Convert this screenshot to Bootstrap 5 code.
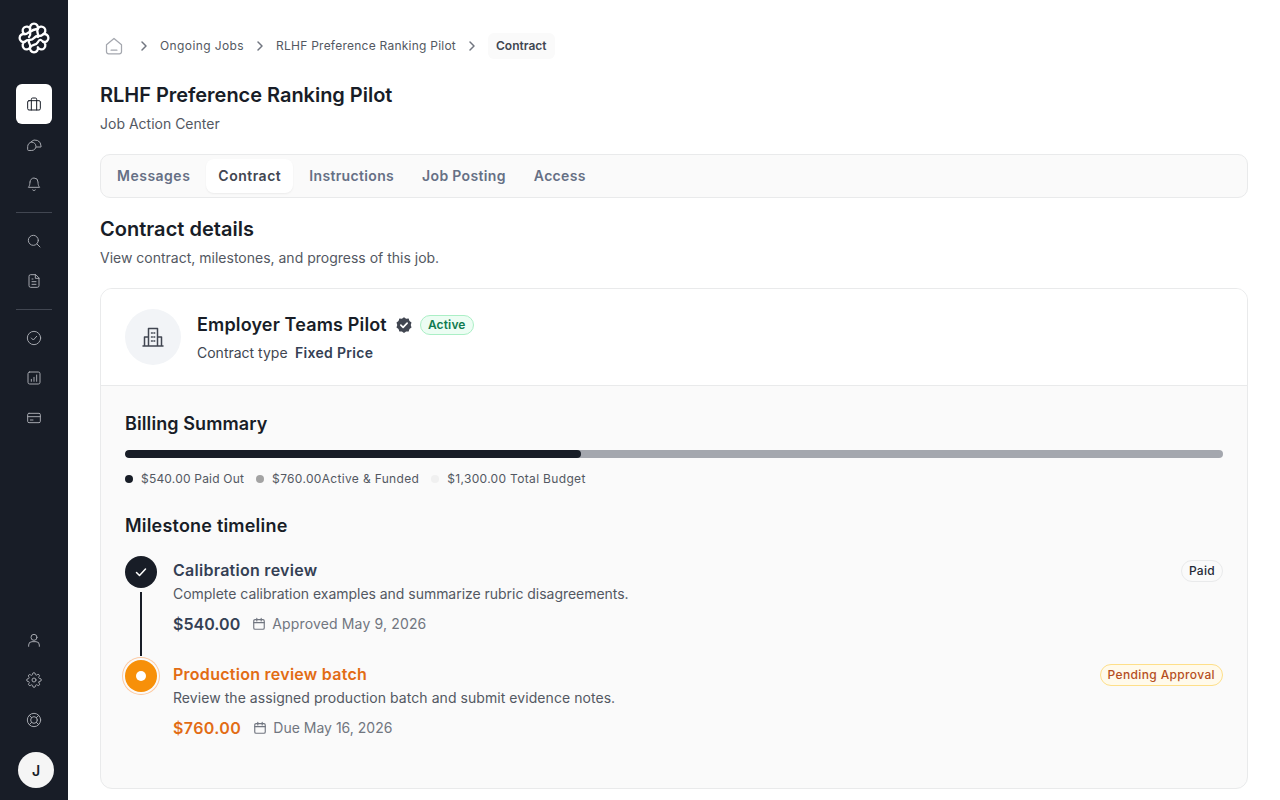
<!DOCTYPE html>
<html lang="en">
<head>
<meta charset="utf-8">
<title>Contract</title>
<link href="https://cdn.jsdelivr.net/npm/bootstrap@5.3.0/dist/css/bootstrap.min.css" rel="stylesheet">
<style>
html,body{height:100%;}
body{font-family:Inter,"Liberation Sans",sans-serif;color:#181d27;background:#fff;overflow:hidden;}
.app-shell{height:800px;}
.side-rail{width:68px;background:#181d27;flex:none;padding-top:22px;}
.rail-logo{height:32px;margin-bottom:30px;}
.rail-btn{width:36px;height:40px;border-radius:6px;color:#a4a7ae;}
.rail-btn svg{width:16px;height:16px;fill:none;stroke:currentColor;stroke-width:1.5;stroke-linecap:round;stroke-linejoin:round;}
.rail-btn.is-on{background:#fff;color:#181d27;}
.rail-rule{width:36px;height:1px;background:#414651;margin:8px 0;}
.rail-avatar{width:36px;height:36px;border-radius:50%;background:#f5f5f5;color:#181d27;font-size:14px;font-weight:600;margin:12px 0 12px 4px;}
.main-pane{padding:32px 32px 0;min-width:0;}
.crumbs{height:28px;font-size:12px;color:#535862;letter-spacing:.24px;margin-left:4px;}
.crumbs svg.chev{width:12px;height:12px;margin:0 10px;fill:none;stroke:#717680;stroke-width:1.5;stroke-linecap:round;stroke-linejoin:round;}
.crumbs svg.chev.chev-first{margin-left:14px;}
.crumb-wide{letter-spacing:.4px;}
.crumb-home{width:20px;height:20px;fill:none;stroke:#a4a7ae;stroke-width:1.5;stroke-linecap:round;stroke-linejoin:round;}
.crumb-now{background:#fafafa;border-radius:6px;padding:4px 8px;font-weight:600;color:#414651;letter-spacing:0;}
.page-title{font-size:20px;line-height:30px;font-weight:600;margin:20px 0 0;letter-spacing:-.03px;}
.page-sub{font-size:14px;line-height:20px;color:#535862;margin:4px 0 0;}
.tab-strip{height:44px;margin-top:20px;background:#fafafa;border:1px solid #e9eaeb;border-radius:10px;padding:4px;gap:4px;}
.tab-item{font-size:14px;font-weight:600;letter-spacing:.34px;color:#667085;padding:0 12px 2px;height:34px;border-radius:8px;}
.tab-item.tab-wide{letter-spacing:.5px;}
.tab-item.is-on{background:#fff;color:#414651;box-shadow:0 1px 2px rgba(10,13,18,.06);}
.sect-title{font-size:20px;line-height:30px;font-weight:600;margin:16px 0 0;letter-spacing:.03px;}
.sect-sub{font-size:14px;line-height:20px;color:#535862;margin:4px 0 0;}
.job-panel{margin-top:20px;border:1px solid #e9eaeb;border-radius:12px;height:501px;background:#fafafa;overflow:hidden;}
.panel-head{background:#fff;border-bottom:1px solid #e9eaeb;padding:20px 24px;height:97px;}
.org-disc{width:56px;height:56px;border-radius:50%;background:#f2f4f7;}
.org-disc svg{width:24px;height:24px;fill:none;stroke:#414651;stroke-width:1.5;stroke-linecap:round;stroke-linejoin:round;}
.org-name{font-size:18px;line-height:28px;font-weight:600;letter-spacing:.15px;}
.tick-badge{width:18px;height:18px;}
.state-pill{font-size:12px;line-height:18px;font-weight:600;color:#0f7a50;background:#ecfdf3;border:1px solid #abefc6;border-radius:999px;padding:0 7px;letter-spacing:.15px;margin-left:-1px;}
.org-type{font-size:14px;line-height:20px;color:#414651;margin-top:4px;}
.org-type b{font-weight:600;margin-left:3.500px;color:#344054;letter-spacing:.3px;}
.panel-body{padding:24px;}
.block-title{font-size:18px;line-height:28px;font-weight:600;margin:0;letter-spacing:.1px;}
.block-wide{letter-spacing:.2px;}
.bill-track{height:8px;border-radius:8px;background:#a4a7ae;margin-top:12px;overflow:hidden;}
.bill-fill{height:100%;background:#181d27;border-radius:8px;}
.bill-legend{font-size:12px;line-height:18px;color:#535862;margin-top:12px;letter-spacing:.2px;}
.legend-wide{letter-spacing:.33px;}
.legend-dot{width:8px;height:8px;border-radius:50%;flex:none;margin-right:8px;}
.legend-gap{margin-left:12px;}
.dot-dark{background:#181d27;}.dot-mid{background:#a3a3a3;}.dot-pale{background:#f0f0f0;}
.mile-title-wrap{margin-top:24px;}
.mile-list{margin-top:16px;}
.mile-row{gap:16px;height:104px;}
.mile-axis{width:32px;flex:none;}
.mile-node{width:32px;height:32px;border-radius:50%;flex:none;}
.node-done{background:#181d27;}
.node-done svg{width:16px;height:16px;fill:none;stroke:#fff;stroke-width:1.5;stroke-linecap:round;stroke-linejoin:round;}
.node-now{background:#f79009;box-shadow:0 0 0 2px #fafafa,0 0 0 3px #fdc9a0;}
.node-core{width:10px;height:10px;border-radius:50%;background:#fff;}
.mile-stem{width:2px;height:64px;background:#181d27;margin-top:4px;}
.mile-copy{min-width:0;}
.mile-name{font-size:16px;line-height:24px;font-weight:600;color:#344054;margin-top:2px;letter-spacing:.27px;}
.mile-note{font-size:14px;line-height:20px;color:#535862;margin-top:2px;}
.note-tight{letter-spacing:-.03px;}
.note-loose{letter-spacing:.06px;}
.mile-meta{margin-top:8px;gap:12px;}
.mile-cost{font-size:16px;line-height:24px;font-weight:600;color:#344054;letter-spacing:.03px;}
.mile-cost.tone-warm{letter-spacing:.4px;}
.mile-date{font-size:14px;line-height:20px;color:#717680;gap:6px;letter-spacing:.15px;}
.mile-date.date-tight{letter-spacing:0;}
.mile-date svg{width:14px;height:14px;fill:none;stroke:#717680;stroke-width:1.3;stroke-linecap:round;stroke-linejoin:round;}
.mile-name.tone-warm,.mile-cost.tone-warm{color:#e26c14;}
.paid-pill,.wait-pill{font-size:12px;line-height:18px;font-weight:500;border-radius:999px;padding:1px 7px;height:22px;margin-top:4px;letter-spacing:.3px;}
.paid-pill{color:#252b37;background:#fafafa;border:1px solid #e9eaeb;}
.wait-pill{color:#b54f1e;background:#fffaeb;border:1px solid #fedf89;letter-spacing:.36px;}
</style>
</head>
<body>
<div class="app-shell d-flex">
  <aside class="side-rail d-flex flex-column align-items-center">
    <div class="rail-logo">
      <svg width="32" height="32" viewBox="0 0 32 32" fill="none" stroke="#fff" stroke-width="2.300" stroke-linecap="round" stroke-linejoin="round">
        <path d="M25.240 12.170A4 4 0 1 1 25.240 19.830A4 4 0 1 1 19.830 25.240A4 4 0 1 1 12.170 25.240A4 4 0 1 1 6.760 19.830A4 4 0 1 1 6.760 12.170A4 4 0 1 1 12.170 6.760A4 4 0 1 1 19.830 6.760A4 4 0 1 1 25.240 12.170Z"/>
        <path d="M6.760 19.830C10 16 13 20 16 16S22 16 25.240 12.170M12.170 25.240C14 22 18 24 20 20S24 19 25.240 19.830M6.760 12.170C10 12 12 8 19.830 6.760"/>
        <path d="M12.170 6.760C11 10 14 12 11 15M19.830 6.760C18 10 21 12 20 15M12.170 25.240C13 22 10 21 11 19"/>
      </svg>
    </div>
    <div class="rail-btn is-on d-flex align-items-center justify-content-center"><svg viewBox="0 0 24 24"><rect x="2.500" y="7" width="19" height="14" rx="2"/><path d="M8 21V5a2 2 0 0 1 2-2h4a2 2 0 0 1 2 2v16"/></svg></div>
    <div class="rail-btn d-flex align-items-center justify-content-center"><svg viewBox="0 0 24 24"><path d="M7.500 8.500A8.800 8.800 0 0 1 22.500 15v1.500H15.500"/><path d="M2.500 15.500a6.200 6.200 0 1 1 6.200 6.200H3.500a1 1 0 0 1-1-1z"/></svg></div>
    <div class="rail-btn d-flex align-items-center justify-content-center"><svg viewBox="0 0 24 24"><path d="M6 9a6 6 0 0 1 12 0c0 6 2.500 8 2.500 8h-17S6 15 6 9"/><path d="M10 21a2.500 2.500 0 0 0 4 0"/></svg></div>
    <div class="rail-rule"></div>
    <div class="rail-btn d-flex align-items-center justify-content-center"><svg viewBox="0 0 24 24"><circle cx="11" cy="11" r="7.500"/><path d="m21 21-4.500-4.500"/></svg></div>
    <div class="rail-btn d-flex align-items-center justify-content-center"><svg viewBox="0 0 24 24"><path d="M14 2.500H7a2.500 2.500 0 0 0-2.500 2.500v14A2.500 2.500 0 0 0 7 21.500h10a2.500 2.500 0 0 0 2.500-2.500V8z"/><path d="M14 2.500V8h5.500M9 9h1.500M9 13h6M9 17h6"/></svg></div>
    <div class="rail-rule"></div>
    <div class="rail-btn d-flex align-items-center justify-content-center"><svg viewBox="0 0 24 24"><circle cx="12" cy="12" r="10"/><path d="m8 12 3 3 5-5.500"/></svg></div>
    <div class="rail-btn d-flex align-items-center justify-content-center"><svg viewBox="0 0 24 24"><rect x="3" y="3" width="18" height="18" rx="2.500"/><path d="M8 17v-3M12 17v-6M16 17V7.500"/></svg></div>
    <div class="rail-btn d-flex align-items-center justify-content-center"><svg viewBox="0 0 24 24"><rect x="2.500" y="5" width="19" height="14" rx="2"/><path d="M2.500 10h19M6.500 15h4"/></svg></div>
    <div class="flex-grow-1"></div>
    <div class="rail-btn d-flex align-items-center justify-content-center"><svg viewBox="0 0 24 24"><circle cx="12" cy="8" r="4.500"/><path d="M4 21.500v-2a5 5 0 0 1 5-5h6a5 5 0 0 1 5 5v2"/></svg></div>
    <div class="rail-btn d-flex align-items-center justify-content-center"><svg viewBox="0 0 24 24"><circle cx="12" cy="12" r="3"/><path d="M19.400 15a1.650 1.650 0 0 0 .330 1.820l.060.060a2 2 0 1 1-2.830 2.830l-.060-.060a1.650 1.650 0 0 0-2.800 1.170V21a2 2 0 1 1-4 0v-.090a1.650 1.650 0 0 0-2.800-1.140l-.060.060a2 2 0 1 1-2.830-2.830l.060-.060a1.650 1.650 0 0 0-1.170-2.800H3a2 2 0 1 1 0-4h.090a1.650 1.650 0 0 0 1.140-2.800l-.060-.060a2 2 0 1 1 2.830-2.830l.060.060a1.650 1.650 0 0 0 2.800-1.170V3a2 2 0 1 1 4 0v.090a1.650 1.650 0 0 0 2.800 1.140l.060-.060a2 2 0 1 1 2.830 2.830l-.060.060a1.650 1.650 0 0 0 1.170 2.800H21a2 2 0 1 1 0 4h-.090a1.650 1.650 0 0 0-1.510 1.140z"/></svg></div>
    <div class="rail-btn d-flex align-items-center justify-content-center"><svg viewBox="0 0 24 24"><circle cx="12" cy="12" r="10"/><circle cx="12" cy="12" r="5"/><path d="m5 5 3.500 3.500M19 5l-3.500 3.500M5 19l3.500-3.500M19 19l-3.500-3.500"/></svg></div>
    <div class="rail-avatar d-flex align-items-center justify-content-center">J</div>
  </aside>
  <main class="main-pane flex-grow-1">
    <nav class="crumbs d-flex align-items-center">
      <svg class="crumb-home" viewBox="0 0 24 24"><path d="M3 10.500 12 3l9 7.500V19a2.500 2.500 0 0 1-2.500 2.500h-13A2.500 2.500 0 0 1 3 19z"/><path d="M8.500 17h7"/></svg>
      <svg class="chev chev-first" viewBox="0 0 12 12"><path d="m4 2 4 4-4 4"/></svg>
      <span class="crumb-wide">Ongoing Jobs</span>
      <svg class="chev" viewBox="0 0 12 12"><path d="m4 2 4 4-4 4"/></svg>
      <span>RLHF Preference Ranking Pilot</span>
      <svg class="chev" viewBox="0 0 12 12"><path d="m4 2 4 4-4 4"/></svg>
      <span class="crumb-now">Contract</span>
    </nav>
    <h1 class="page-title">RLHF Preference Ranking Pilot</h1>
    <p class="page-sub">Job Action Center</p>
    <div class="tab-strip d-flex align-items-start">
      <div class="tab-item tab-wide d-flex align-items-center">Messages</div>
      <div class="tab-item tab-wide is-on d-flex align-items-center">Contract</div>
      <div class="tab-item d-flex align-items-center">Instructions</div>
      <div class="tab-item d-flex align-items-center">Job Posting</div>
      <div class="tab-item d-flex align-items-center">Access</div>
    </div>
    <h2 class="sect-title">Contract details</h2>
    <p class="sect-sub">View contract, milestones, and progress of this job.</p>
    <section class="job-panel">
      <div class="panel-head d-flex align-items-center gap-3">
        <div class="org-disc d-flex align-items-center justify-content-center">
          <svg viewBox="0 0 24 24"><path d="M2 21h20M3.500 21v-9h4M20.500 21v-9h-4M7.500 21V3.500h9V21M10.500 8h.8M12.900 8h.8M10.500 12h.8M12.900 12h.8M10.500 16h.8M12.900 16h.8"/></svg>
        </div>
        <div>
          <div class="d-flex align-items-center gap-2">
            <span class="org-name">Employer Teams Pilot</span>
            <svg class="tick-badge" viewBox="0 0 24 24"><path fill="#414651" d="M12 1.500l2.800 2 3.400-.2 1.100 3.300 2.700 2-1 3.400 1 3.400-2.700 2-1.100 3.300-3.400-.2-2.800 2-2.800-2-3.400.2-1.100-3.300-2.700-2 1-3.400-1-3.400 2.700-2 1.100-3.300 3.400.2z"/><path d="m7.800 12.200 3 3 5.400-5.700" fill="none" stroke="#fff" stroke-width="2.200" stroke-linecap="round" stroke-linejoin="round"/></svg>
            <span class="state-pill">Active</span>
          </div>
          <div class="org-type">Contract type <b>Fixed Price</b></div>
        </div>
      </div>
      <div class="panel-body">
        <h3 class="block-title">Billing Summary</h3>
        <div class="bill-track"><div class="bill-fill" style="width:41.54%"></div></div>
        <div class="bill-legend d-flex align-items-center">
          <span class="legend-dot dot-dark"></span><span>$540.00 Paid Out</span>
          <span class="legend-dot dot-mid legend-gap"></span><span class="legend-wide">$760.00Active &amp; Funded</span>
          <span class="legend-dot dot-pale legend-gap"></span><span class="legend-wide">$1,300.00 Total Budget</span>
        </div>
        <div class="mile-title-wrap"><h3 class="block-title block-wide">Milestone timeline</h3></div>
        <div class="mile-list">
          <div class="mile-row d-flex">
            <div class="mile-axis d-flex flex-column align-items-center">
              <div class="mile-node node-done d-flex align-items-center justify-content-center"><svg viewBox="0 0 16 16"><path d="m3.500 8.500 3 3 6-6.500"/></svg></div>
              <div class="mile-stem"></div>
            </div>
            <div class="mile-copy flex-grow-1">
              <div class="mile-name">Calibration review</div>
              <div class="mile-note note-tight">Complete calibration examples and summarize rubric disagreements.</div>
              <div class="mile-meta d-flex align-items-center">
                <span class="mile-cost">$540.00</span>
                <span class="mile-date d-flex align-items-center"><svg viewBox="0 0 16 16"><rect x="2" y="3" width="12" height="11" rx="1.500"/><path d="M2 6.500h12M5.500 1.500v3M10.500 1.500v3"/></svg>Approved May 9, 2026</span>
              </div>
            </div>
            <div><span class="paid-pill d-inline-flex align-items-center">Paid</span></div>
          </div>
          <div class="mile-row d-flex">
            <div class="mile-axis d-flex flex-column align-items-center">
              <div class="mile-node node-now d-flex align-items-center justify-content-center"><div class="node-core"></div></div>
            </div>
            <div class="mile-copy flex-grow-1">
              <div class="mile-name tone-warm">Production review batch</div>
              <div class="mile-note note-loose">Review the assigned production batch and submit evidence notes.</div>
              <div class="mile-meta d-flex align-items-center">
                <span class="mile-cost tone-warm">$760.00</span>
                <span class="mile-date date-tight d-flex align-items-center"><svg viewBox="0 0 16 16"><rect x="2" y="3" width="12" height="11" rx="1.500"/><path d="M2 6.500h12M5.500 1.500v3M10.500 1.500v3"/></svg>Due May 16, 2026</span>
              </div>
            </div>
            <div><span class="wait-pill d-inline-flex align-items-center">Pending Approval</span></div>
          </div>
        </div>
      </div>
    </section>
  </main>
</div>
<script src="https://cdn.jsdelivr.net/npm/bootstrap@5.3.0/dist/js/bootstrap.bundle.min.js"></script>
</body>
</html>
